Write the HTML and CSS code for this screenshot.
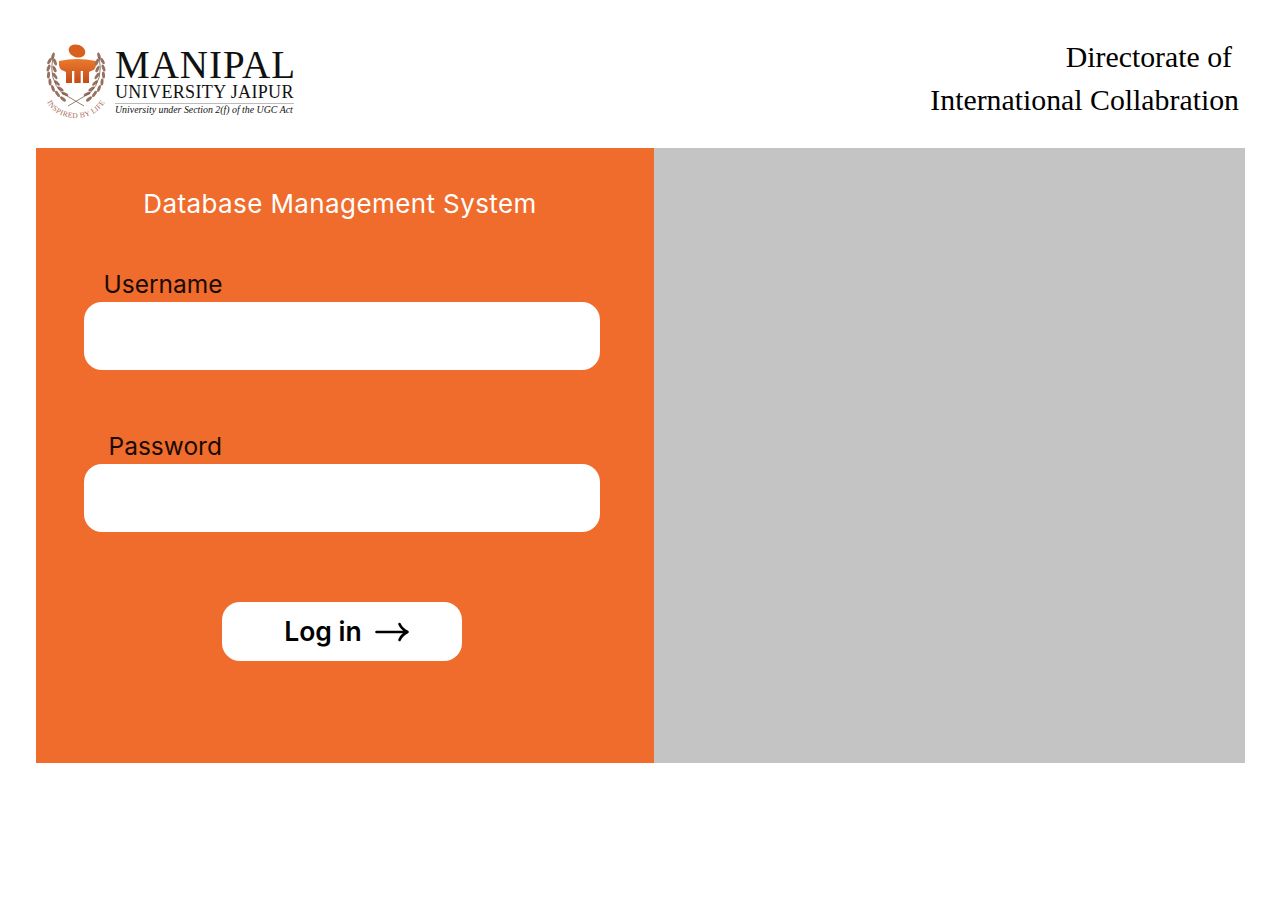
FILE: index.html
```html
<!DOCTYPE html>
<html lang="en">
<head>
<meta charset="utf-8">
<title>Database Management System</title>
<link rel="stylesheet" href="styles.css">
</head>
<body>
<header class="top">
  <div class="logo">
    <svg class="crest" width="62" height="78" viewBox="0 0 62 78" aria-hidden="true">
      <defs>
        <linearGradient id="g" x1="0" y1="0" x2="0" y2="1">
          <stop offset="0" stop-color="#ea7a2e"/>
          <stop offset="1" stop-color="#c44c18"/>
        </linearGradient>
        <path id="arc" d="M0 50 A31 25 0 0 0 62 50" fill="none"/>
        <ellipse id="leaf" rx="3.600" ry="1.500" fill="#97705f"/>
        <g id="wreath">
          <use href="#leaf" transform="translate(6 13) rotate(-75)"/>
          <use href="#leaf" transform="translate(2.500 18) rotate(-60)"/>
          <use href="#leaf" transform="translate(8 19) rotate(-110)"/>
          <use href="#leaf" transform="translate(1.500 25) rotate(-70)"/>
          <use href="#leaf" transform="translate(7.500 26) rotate(-115)"/>
          <use href="#leaf" transform="translate(1.500 32) rotate(-85)"/>
          <use href="#leaf" transform="translate(8 33) rotate(-125)"/>
          <use href="#leaf" transform="translate(3 39) rotate(-95)"/>
          <use href="#leaf" transform="translate(10 40) rotate(-135)"/>
          <use href="#leaf" transform="translate(6 45.500) rotate(-110)"/>
          <use href="#leaf" transform="translate(13.500 46) rotate(-145)"/>
          <use href="#leaf" transform="translate(10.500 51) rotate(-125)"/>
          <use href="#leaf" transform="translate(18 51) rotate(-155)"/>
          <use href="#leaf" transform="translate(16 56) rotate(-140)"/>
          <path d="M6 14 Q1 36 15 50 L37 63" fill="none" stroke="#7b5a4c" stroke-width=".8"/>
        </g>
      </defs>
      <ellipse cx="32" cy="8" rx="8.500" ry="6.300" fill="#d8601e" transform="rotate(20 32 8)"/>
      <path d="M14 18 Q32 14 51 18 Q52 27 46 28 L44 29 L44 40 L38 40 L38 28 L35.700 28 L35.700 40 L29.300 40 L29.300 28 L27 28 L27 40 L21 40 L21 29 L19 28 Q13 27 14 18Z" fill="url(#g)"/>
      <use href="#wreath" transform="translate(2 0)"/>
      <use href="#wreath" transform="matrix(-1 0 0 1 60 0)"/>
      <text class="motto" fill="#a66c58"><textPath href="#arc" startOffset="50%" text-anchor="middle">INSPIRED BY LIFE</textPath></text>
    </svg>
    <div class="wordmark">
      <div class="name">MANIPAL</div>
      <div class="campus">UNIVERSITY JAIPUR</div>
      <div class="note">University under Section 2(f) of the UGC Act</div>
    </div>
  </div>
  <div class="unit">
    <div class="unit-one">Directorate of</div>
    <div>International Collabration</div>
  </div>
</header>
<main class="panel">
  <section class="login">
    <h1 class="title">Database Management System</h1>
    <form class="form">
      <label class="field field-user">
        <span class="label">Username</span>
        <input class="input" type="text">
      </label>
      <label class="field field-pass">
        <span class="label">Password</span>
        <input class="input" type="password">
      </label>
      <button class="submit" type="button">
        <span class="submit-text">Log in</span>
        <svg width="36" height="20" viewBox="0 0 36 20" fill="none" stroke="#000" stroke-width="2.600" stroke-linecap="round" stroke-linejoin="round" aria-hidden="true">
          <path d="M1.500 10H32.500M24.500 2Q26.500 7 32.500 10Q26.500 13 24.500 18"/>
        </svg>
      </button>
    </form>
  </section>
  <section class="visual"></section>
</main>
</body>
</html>
```
FILE: styles.css
```css
* { box-sizing: border-box; }
html, body { margin: 0; background: #fff; }
body { width: 1280px; height: 910px; overflow: hidden; font-family: Inter, sans-serif; }

.top { height: 148px; display: flex; justify-content: space-between; padding: 41px 41px 0 45px; }
.logo { display: flex; gap: 8px; height: 80px; }
.crest { display: block; margin-top: 2px; }
.motto { font-family: "Liberation Serif", serif; font-size: 7.500px; letter-spacing: .35px; }
.wordmark { color: #111; font-family: "Liberation Serif", serif; display: flex; flex-direction: column; align-items: flex-start; }
.name { font-size: 39px; line-height: 36px; height: 36px; margin-top: 6px; letter-spacing: 1px; white-space: nowrap; }
.campus { font-size: 18px; line-height: 19px; border-bottom: 1px solid #bbb; padding-bottom: 1px; letter-spacing: .35px; white-space: nowrap; }
.note { font-size: 9.850px; line-height: 12px; font-style: italic; margin-top: 0; white-space: nowrap; }

.unit { font-family: "Liberation Serif", serif; font-size: 29.800px; line-height: 43px; text-align: right; color: #000; margin-top: -6px; }
.unit-one { padding-right: 7px; }

.panel { margin-left: 36px; width: 1209px; height: 615px; display: flex; }
.login { width: 618px; background: #f06c2c; padding-top: 37px; }
.visual { flex: 1; background: #c4c4c4; }
.title { margin: 0; font-size: 26px; line-height: 38px; font-weight: 400; color: #fff; text-align: center; padding-right: 10px; letter-spacing: .4px; }
.form { display: flex; flex-direction: column; padding: 0 54px 0 48px; margin-top: 47px; }
.field { display: flex; flex-direction: column; }
.field-pass { margin-top: 62px; }
.label { font-size: 24.500px; line-height: 28px; color: #1a0a04; height: 32px; }
.field-user .label { padding-left: 19.500px; }
.field-pass .label { padding-left: 24.500px; }
.input { height: 68px; border: 0; border-radius: 18px; background: #fff; display: block; width: 100%; outline: 0; }
.submit { align-self: center; margin: 70px 0 0 0; width: 240px; height: 59px; border: 0; border-radius: 18px; background: #fff; display: flex; align-items: center; justify-content: center; gap: 13px; font: 600 26.500px Inter, sans-serif; color: #000; padding: 0 0 0 11px; }
.submit-text { margin-top: -2px; }
```
